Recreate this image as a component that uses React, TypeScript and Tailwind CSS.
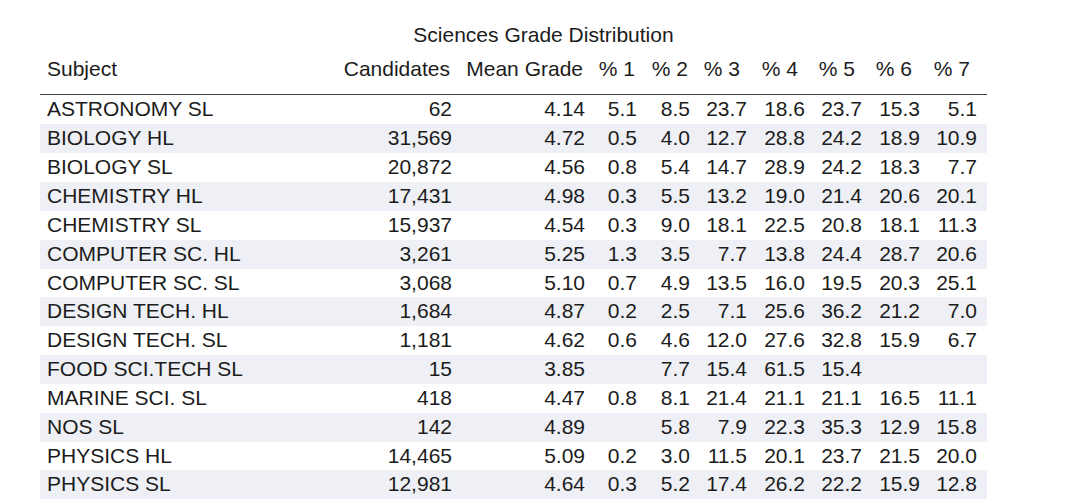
import React from "react";

type Row = [string, string, string, string, string, string, string, string, string, string];

const rows: Row[] = [
  ["ASTRONOMY SL", "62", "4.14", "5.1", "8.5", "23.7", "18.6", "23.7", "15.3", "5.1"],
  ["BIOLOGY HL", "31,569", "4.72", "0.5", "4.0", "12.7", "28.8", "24.2", "18.9", "10.9"],
  ["BIOLOGY SL", "20,872", "4.56", "0.8", "5.4", "14.7", "28.9", "24.2", "18.3", "7.7"],
  ["CHEMISTRY HL", "17,431", "4.98", "0.3", "5.5", "13.2", "19.0", "21.4", "20.6", "20.1"],
  ["CHEMISTRY SL", "15,937", "4.54", "0.3", "9.0", "18.1", "22.5", "20.8", "18.1", "11.3"],
  ["COMPUTER SC. HL", "3,261", "5.25", "1.3", "3.5", "7.7", "13.8", "24.4", "28.7", "20.6"],
  ["COMPUTER SC. SL", "3,068", "5.10", "0.7", "4.9", "13.5", "16.0", "19.5", "20.3", "25.1"],
  ["DESIGN TECH. HL", "1,684", "4.87", "0.2", "2.5", "7.1", "25.6", "36.2", "21.2", "7.0"],
  ["DESIGN TECH. SL", "1,181", "4.62", "0.6", "4.6", "12.0", "27.6", "32.8", "15.9", "6.7"],
  ["FOOD SCI.TECH SL", "15", "3.85", "", "7.7", "15.4", "61.5", "15.4", "", ""],
  ["MARINE SCI. SL", "418", "4.47", "0.8", "8.1", "21.4", "21.1", "21.1", "16.5", "11.1"],
  ["NOS SL", "142", "4.89", "", "5.8", "7.9", "22.3", "35.3", "12.9", "15.8"],
  ["PHYSICS HL", "14,465", "5.09", "0.2", "3.0", "11.5", "20.1", "23.7", "21.5", "20.0"],
  ["PHYSICS SL", "12,981", "4.64", "0.3", "5.2", "17.4", "26.2", "22.2", "15.9", "12.8"],
];

const headers = ["Candidates", "Mean Grade", "% 1", "% 2", "% 3", "% 4", "% 5", "% 6", "% 7"];

// padding-right for header cells (headers sit slightly left of data ends)
const headerPad = [
  "pr-[7px]",
  "pr-[7px]",
  "pr-[7px]",
  "pr-[7px]",
  "pr-[12px]",
  "pr-[12px]",
  "pr-[12px]",
  "pr-[13px]",
  "pr-[17px]",
];

const dataPad = [
  "pr-[5px]",
  "pr-[5px]",
  "pr-[5px]",
  "pr-[5px]",
  "pr-[5px]",
  "pr-[5px]",
  "pr-[5px]",
  "pr-[5px]",
  "pr-[10px]",
];

const gridCols = "grid grid-cols-[260px_157px_133px_52px_53px_57px_58px_57px_58px_62px]";

export default function App() {
  return (
    <div
      className="w-[1080px] h-[499px] overflow-hidden bg-white text-[#1c1c1c] text-[21px] pt-[23px]"
      style={{ fontFamily: '"Liberation Sans", Arial, Helvetica, sans-serif' }}
    >
      <div className="ml-[40px] w-[947px] pl-[60px] text-center leading-[24px]">
        Sciences Grade Distribution
      </div>
      <div className="ml-[40px] w-[947px] mt-[10.4px]">
        <div className={`${gridCols} h-[38.1px] leading-[24px] border-b-[1.5px] border-[#3a4450]`}>
          <div className="pl-[7px] text-left">Subject</div>
          {headers.map((h, i) => (
            <div key={h} className={`text-right whitespace-nowrap ${headerPad[i]}`}>
              {h}
            </div>
          ))}
        </div>
        {rows.map((r, ri) => (
          <div
            key={r[0]}
            className={`${gridCols} h-[28.85px] leading-[28.85px] ${ri % 2 === 1 ? "bg-[#eef0f5]" : "bg-white"}`}
          >
            <div className="pl-[7px] text-left whitespace-nowrap">{r[0]}</div>
            {r.slice(1).map((v, ci) => (
              <div key={ci} className={`text-right whitespace-nowrap ${dataPad[ci]}`}>
                {v}
              </div>
            ))}
          </div>
        ))}
      </div>
    </div>
  );
}
